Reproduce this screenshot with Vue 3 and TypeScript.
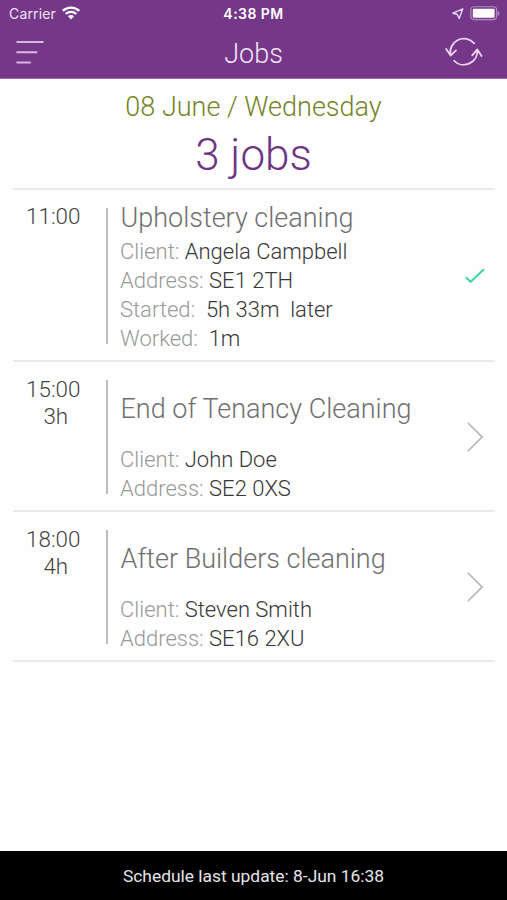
<script setup lang="ts">
interface Detail {
  label: string
  value: string
}

interface Job {
  time: string
  duration?: string
  title: string
  done: boolean
  details: Detail[]
}

const jobs: Job[] = [
  {
    time: '11:00',
    title: 'Upholstery cleaning',
    done: true,
    details: [
      { label: 'Client: ', value: 'Angela Campbell' },
      { label: 'Address: ', value: 'SE1 2TH' },
      { label: 'Started:  ', value: '5h 33m  later' },
      { label: 'Worked:  ', value: '1m' },
    ],
  },
  {
    time: '15:00',
    duration: '3h',
    title: 'End of Tenancy Cleaning',
    done: false,
    details: [
      { label: 'Client: ', value: 'John Doe' },
      { label: 'Address: ', value: 'SE2 0XS' },
    ],
  },
  {
    time: '18:00',
    duration: '4h',
    title: 'After Builders cleaning',
    done: false,
    details: [
      { label: 'Client: ', value: 'Steven Smith' },
      { label: 'Address: ', value: 'SE16 2XU' },
    ],
  },
]
</script>

<template>
  <div class="screen">
    <header class="header">
      <div class="status">
        <div class="carrier">
          <span>Carrier</span>
          <svg class="wifi" viewBox="0 0 18 14" width="18" height="14">
            <path d="M0.8 4.9a11.8 11.8 0 0 1 16.4 0" />
            <path d="M3.7 8a7.6 7.6 0 0 1 10.6 0" />
            <path class="dot" d="M9 13.4l-3-3.1a4.2 4.2 0 0 1 6 0z" />
          </svg>
        </div>
        <span class="clock">4:38 PM</span>
        <div class="indicators">
          <svg class="location" viewBox="0 0 12 12" width="12" height="12">
            <path d="M10.8 0.8L0.9 5.2l4.2 1.1 2.1 4.2z" />
          </svg>
          <svg class="battery" viewBox="0 0 30 15" width="30" height="15">
            <rect class="shell" x="0.8" y="0.8" width="25.8" height="12.8" rx="3" />
            <rect class="charge" x="2.8" y="2.7" width="21.8" height="9" rx="1.2" />
            <path class="cap" d="M27.6 4.7c2.4 1 2.4 4.4 0 5.4z" />
          </svg>
        </div>
      </div>
      <div class="nav">
        <svg class="menu" viewBox="0 0 28 24" width="28" height="24">
          <path d="M0.4 2h27.2M0.4 12.2h21M0.4 22.5h14.4" />
        </svg>
        <h1 class="title">Jobs</h1>
        <svg class="refresh" viewBox="0 0 38 30" width="38" height="30">
          <path d="M29.2 6.3A13.6 13.6 0 0 0 5.6 18M1.2 12l4.4 6.6 5.4-5.2" />
          <path d="M9.2 23.8A13.6 13.6 0 0 0 32.3 13M27.2 18.3l5.1-5.9 4.2 6.6" />
        </svg>
      </div>
    </header>

    <section class="summary">
      <div class="date">08 June / Wednesday</div>
      <div class="count">3 jobs</div>
    </section>

    <main class="jobs">
      <article v-for="job in jobs" :key="job.time" class="job" :class="{ finished: job.done }">
        <div class="when">
          <div>{{ job.time }}</div>
          <div v-if="job.duration" class="duration">{{ job.duration }}</div>
        </div>
        <div class="info">
          <h2 class="name">{{ job.title }}</h2>
          <p v-for="d in job.details" :key="d.label" class="detail">
            <span class="label">{{ d.label }}</span><span class="value">{{ d.value }}</span>
          </p>
        </div>
        <div class="mark">
          <svg v-if="job.done" class="check" viewBox="0 0 20 16" width="20" height="16">
            <path d="M0.9 9.2l4.7 4.6L19 1.2" />
          </svg>
          <svg v-else class="chevron" viewBox="0 0 16 30" width="16" height="30">
            <path d="M0.8 0.8L15 15 0.8 29.2" />
          </svg>
        </div>
      </article>
    </main>

    <footer class="footer">Schedule last update: 8-Jun 16:38</footer>
  </div>
</template>

<style>
body {
  margin: 0;
  background: #fefefe;
}
</style>

<style scoped>
.screen {
  display: flex;
  flex-direction: column;
  box-sizing: border-box;
  width: 507px;
  height: 900px;
  background: #fefefe;
  font-family: Roboto, sans-serif;
  font-weight: 300;
}

svg {
  display: block;
  fill: none;
  flex: none;
}

.header {
  height: 79px;
  flex: none;
  box-sizing: border-box;
  background: #753787;
  border-bottom: 1px solid #9a6ca9;
  color: #fff;
}

.status {
  display: grid;
  grid-template-columns: 1fr auto 1fr;
  align-items: center;
  height: 27px;
  padding: 0 7px 0 9px;
  font-family: Inter, sans-serif;
  font-size: 14px;
}

.carrier {
  display: flex;
  align-items: center;
  gap: 6px;
  font-weight: 400;
  letter-spacing: 0.15px;
  color: #f0e2f4;
}

.wifi {
  margin-top: -1px;
}

.wifi path {
  stroke: #fff;
  stroke-width: 2.3;
}

.wifi .dot {
  fill: #fff;
  stroke: none;
}

.clock {
  font-weight: 600;
  letter-spacing: 0.45px;
  margin-right: 2px;
}

.indicators {
  display: flex;
  align-items: center;
  justify-content: flex-end;
  gap: 6px;
}

.location path {
  stroke: #ead6f0;
  stroke-width: 1.4;
  stroke-linejoin: round;
}

.shell {
  stroke: #b58cc2;
  stroke-width: 1.1;
}

.charge {
  fill: #fff;
}

.cap {
  fill: #b58cc2;
}

.nav {
  display: grid;
  grid-template-columns: 1fr auto 1fr;
  align-items: center;
  height: 50px;
  padding: 0 24px 0 16px;
}

.title {
  margin: 0;
  padding: 4px 0 0 8px;
  font-size: 27px;
  font-weight: 300;
  line-height: 46px;
  color: #f4e4f8;
}

.menu path {
  stroke: #d9b5e3;
  stroke-width: 2;
}

.refresh {
  justify-self: end;
}

.refresh path {
  stroke: #ecd3f3;
  stroke-width: 1.8;
  stroke-linecap: round;
  stroke-linejoin: round;
}

.summary {
  height: 109px;
  flex: none;
  text-align: center;
}

.date {
  padding-top: 11px;
  font-size: 27px;
  line-height: 34px;
  color: #758526;
}

.count {
  padding-top: 1px;
  font-size: 44px;
  line-height: 60px;
  color: #6d3584;
}

.jobs {
  flex: 1;
  display: flex;
  flex-direction: column;
  margin: 0 12px 0 13px;
}

.job {
  display: flex;
  box-sizing: border-box;
  height: 150px;
  padding: 18px 12px 16px 0;
  border-top: 2px solid #eaeaea;
}

.job:last-child {
  height: 152px;
  border-bottom: 2px solid #eaeaea;
}

.job.finished {
  height: 172px;
}

.when {
  width: 92.5px;
  box-sizing: border-box;
  padding-right: 12px;
  flex: none;
  text-align: center;
  font-size: 22.4px;
  line-height: 27px;
  margin-top: -4px;
  color: #444;
}

.finished .when {
  margin-top: -5px;
}

.duration {
  padding-left: 5px;
}

.info {
  flex: 1;
  border-left: 2px solid #bdbdbd;
  padding-left: 12.5px;
}

.name {
  margin: 11px 0 18px;
  padding-left: 0.5px;
  font-size: 27px;
  font-weight: 300;
  line-height: 36px;
  color: #707070;
}

.finished .name {
  margin: -8px 0 1px;
}

.detail {
  margin: 0;
  font-size: 22px;
  line-height: 29px;
  white-space: pre;
}

.label {
  color: #999;
}

.value {
  color: #383838;
}

.mark {
  display: flex;
  align-items: center;
}

.check {
  margin-right: -2px;
}

.check path {
  stroke: #3fd69b;
  stroke-width: 2;
}

.chevron path {
  stroke: #b5b5b5;
  stroke-width: 1.6;
}

.footer {
  height: 49px;
  flex: none;
  background: #000;
  color: #e6e6e6;
  font-size: 17.4px;
  font-weight: 400;
  line-height: 50px;
  text-align: center;
}
</style>
